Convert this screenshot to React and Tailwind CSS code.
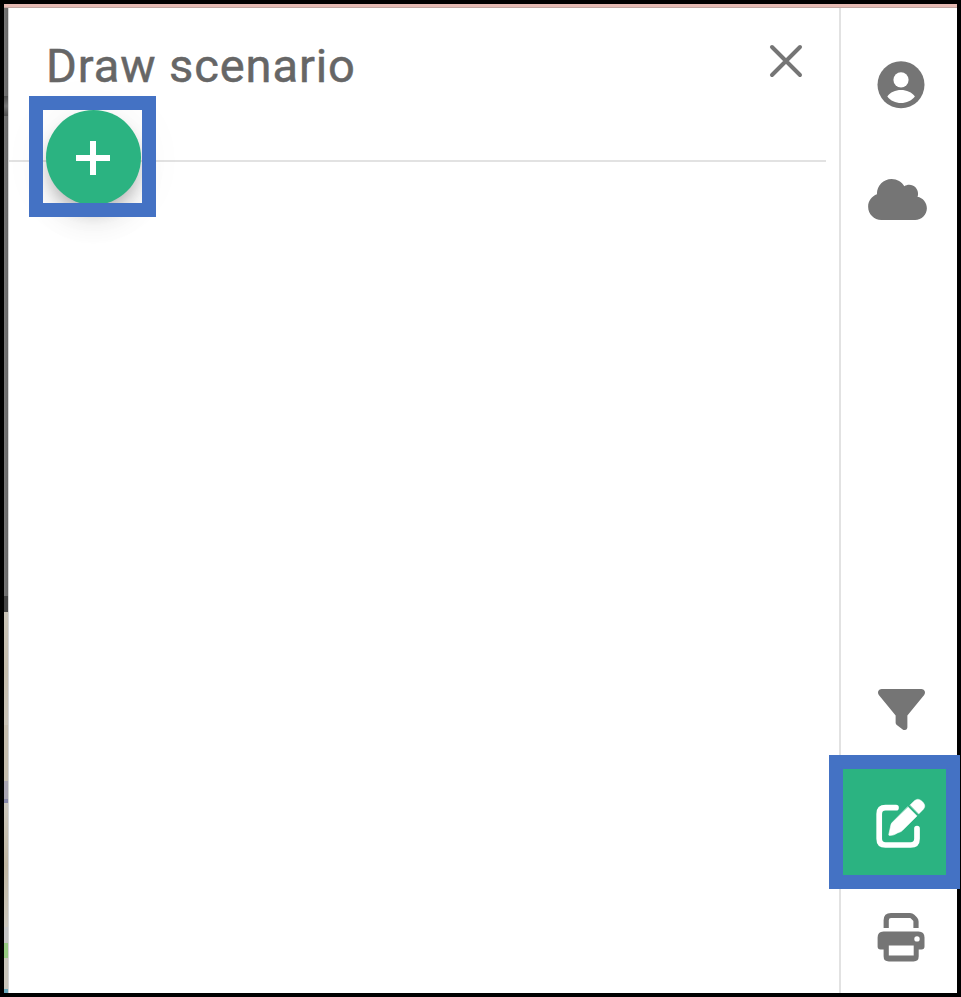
import { FaCloud, FaFilter } from "react-icons/fa6";

function AccountIcon() {
  return (
    <svg className="h-[48px] w-[48px]" viewBox="877 61 48 48" fill="none">
      <circle cx="901" cy="84.8" r="23.5" fill="#757575" />
      <circle cx="901" cy="79.8" r="7.6" fill="#fff" />
      <path d="M887.3 96.4C890 92.4 895.5 90 901 90S912 92.4 914.9 96.4C911.5 100.7 906.5 102.9 901 102.9S890.5 100.7 887.3 96.4Z" fill="#fff" />
    </svg>
  );
}

function DrawIcon() {
  return (
    <svg className="h-[60px] w-[60px]" viewBox="0 0 60 60" fill="currentColor" strokeLinecap="round" strokeLinejoin="round">
      <path d="M26 13.7H15.5Q9.2 13.7 9.2 20V44.7Q9.2 51 15.5 51H40.7Q47 51 47 44.7V34.6" fill="none" stroke="currentColor" strokeWidth="5.7" />
      <path d="M38 12.9L47 21.9L32.6 36.3Q31.2 37.7 29.3 38.3Q27.5 38.8 25.5 40.1Q23.8 41.1 21.8 41.2L19.6 41.4Q18.6 41.4 18.8 40.4L21 30.5Q21.5 29 22.6 28.1Z" stroke="currentColor" strokeWidth="0.6" />
      <path d="M40 11.1L44.3 6.8Q47.9 3.6 51.5 6.8L53.2 8.5Q56.4 12.1 53.2 15.5L48.8 19.9Z" stroke="currentColor" strokeWidth="0.4" />
    </svg>
  );
}

function PrintIcon() {
  return (
    <svg className="h-[60px] w-[60px]" viewBox="0 0 60 60" fill="currentColor">
      <path d="M15.2 20V12.2Q15.2 7.5 20 7.5H39Q40.5 7.5 41.5 8.5L44 11Q45 12 45 13.4V20" fill="none" stroke="currentColor" strokeWidth="5.2" />
      <path fillRule="evenodd" d="M12.5 23.5H47.5Q53.5 23.5 53.5 29.5V38.6Q53.5 41.5 50.5 41.5H47.7V48.2Q47.7 53.4 42.6 53.4H17.8Q12.6 53.4 12.6 48.2V41.5H9.5Q6.6 41.5 6.6 38.6V29.5Q6.6 23.5 12.5 23.5ZM17.8 37.4V47.4H42.7V37.4ZM46 28.2A2.7 2.7 0 1 0 46 33.6A2.7 2.7 0 1 0 46 28.2Z" />
    </svg>
  );
}

function MapEdge() {
  return (
    <div className="flex w-[4px] shrink-0 flex-col bg-[#c5bfb3]">
      <div className="h-[88px] bg-linear-to-r from-[#777] to-[#666]" />
      <div className="h-[20px] bg-linear-to-b from-[#505050] via-[#777] to-[#505050]" />
      <div className="h-[480px] bg-linear-to-r from-[#777] to-[#666]" />
      <div className="h-[16px] bg-[#444]" />
      <div className="h-[113px] bg-linear-to-b from-[#c9c3b7] via-[#c4bcab] to-[#c9c3b7]" />
      <div className="h-[56px] bg-[#c4bcad]" />
      <div className="h-[18px] bg-[#a9a5b2]" />
      <div className="h-[4px] bg-[#8586a7]" />
      <div className="h-[124px] bg-linear-to-b from-[#cbc6bc] via-[#bfb5a1] to-[#cbc6bc]" />
      <div className="h-[16px] bg-[#c4c4c4]" />
      <div className="h-[15px] bg-[#97c982]" />
      <div className="grow bg-[#c9c5bb]" />
      <div className="h-[4px] bg-[#68a9bc]" />
    </div>
  );
}

function ScenarioPanel() {
  return (
    <main className="flex grow flex-col border-l border-[#d6d6d6] bg-white">
      <header className="mr-[13px] flex h-[154px] items-start justify-between border-b-2 border-[#e2e2e2] pl-[37px]">
        <h1 className="pt-[30px] text-[47px] leading-[56px] font-normal tracking-[0.92px] whitespace-nowrap text-[#666] [-webkit-text-stroke:0.5px_#666]">
          Draw scenario
        </h1>
        <button className="mt-[36px] mr-[23px]" aria-label="Close">
          <svg className="h-[34px] w-[34px]" viewBox="0 0 34 34" stroke="#757575" strokeWidth="4" strokeLinecap="round">
            <path d="M3 3L31 31M31 3L3 31" />
          </svg>
        </button>
      </header>
      <button
        className="-mt-[52px] ml-[36.5px] flex h-[95px] w-[95px] items-center justify-center rounded-full bg-[#2bb381] shadow-[0_9px_15px_-3px_rgba(0,0,0,0.2),0_18px_30px_-4px_rgba(0,0,0,0.12),0_3px_54px_rgba(0,0,0,0.06)]"
        aria-label="Add"
      >
        <svg className="h-[36px] w-[36px]" viewBox="0 0 36 36" stroke="#fff" strokeWidth="6">
          <path d="M18 1V35M1 18H35" />
        </svg>
      </button>
    </main>
  );
}

function Toolbar() {
  return (
    <nav className="flex w-[118px] shrink-0 flex-col border-l-2 border-[#e2e2e2] bg-white text-[#757575]">
      <button className="mt-[20px] flex h-[114px] items-center justify-center pl-[4px]" aria-label="Account">
        <AccountIcon />
      </button>
      <button className="flex h-[114px] items-center justify-center pr-[3px]" aria-label="Cloud">
        <FaCloud className="h-[47px] w-[59px]" />
      </button>
      <button className="mt-auto flex h-[114px] items-center justify-center pb-[2px] pl-[4px]" aria-label="Filter">
        <FaFilter className="h-[47px] w-[47px]" />
      </button>
      <button className="flex h-[114px] items-center justify-center bg-[#2bb381] pl-[2px] text-white" aria-label="Draw">
        <DrawIcon />
      </button>
      <button className="flex h-[112px] items-center justify-center pt-px pl-[4px]" aria-label="Print">
        <PrintIcon />
      </button>
    </nav>
  );
}

export default function App() {
  return (
    <div className="relative h-[997px] w-[961px] overflow-hidden font-[Roboto,sans-serif]">
      <div className="flex h-full flex-col border-4 border-black bg-white">
        <div className="h-[4px] shrink-0 border-b border-[#c3a8a3] bg-[#e6bab3]" />
        <div className="flex min-h-0 grow">
          <MapEdge />
          <ScenarioPanel />
          <Toolbar />
        </div>
      </div>
      <div className="absolute top-[96px] left-[29px] h-[121px] w-[127px] border-[14px] border-[#4472c4]" />
      <div className="absolute top-[755px] left-[829px] h-[134px] w-[131px] border-[14px] border-[#4472c4]" />
    </div>
  );
}
